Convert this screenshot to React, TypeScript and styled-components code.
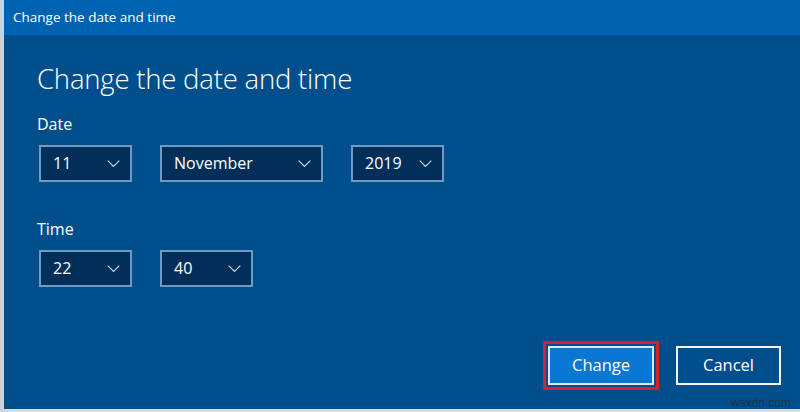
import styled, { createGlobalStyle } from 'styled-components'

const GlobalStyle = createGlobalStyle`
    html, body {
        margin: 0;
        padding: 0;
        background: #d6dce2;
    }
    * {
        box-sizing: border-box;
    }
`

interface ComboProps {
    value: string
    width: number
}

const Chevron = () => (
    <svg width="13" height="8" viewBox="0 0 13 8">
        <path d="M0.7 0.7 L6.5 6.5 L12.3 0.7" fill="none" stroke="#c9d9ea" strokeWidth="1.2" />
    </svg>
)

const Combo = ({ value, width }: ComboProps) => (
    <ComboBox $width={width}>
        <ComboValue>{ value }</ComboValue>
        <Chevron />
    </ComboBox>
)

const App = () => {
    return (
        <>
            <GlobalStyle />
            <Window>
                <TitleBar>Change the date and time</TitleBar>
                <Body>
                    <Heading>Change the date and time</Heading>
                    <Label>Date</Label>
                    <Row>
                        <Combo value="11" width={93} />
                        <Combo value="November" width={163} />
                        <Combo value="2019" width={93} />
                    </Row>
                    <Label $top={36}>Time</Label>
                    <Row>
                        <Combo value="22" width={93} />
                        <Combo value="40" width={93} />
                    </Row>
                    <Footer>
                        <Highlight>
                            <Button $primary>Change</Button>
                        </Highlight>
                        <Button>Cancel</Button>
                    </Footer>
                </Body>
                <BottomStrip />
                <Watermark>wsxdn.com</Watermark>
            </Window>
        </>
    )
}

export default App

// 样式组件
const Window = styled.div`
    position: relative;
    width: 800px;
    height: 412px;
    display: flex;
    flex-direction: column;
    border-left: 4px solid #c9d3dc;
    font-family: 'Open Sans', 'Noto Sans', sans-serif;
    overflow: hidden;
`
const TitleBar = styled.div`
    height: 35px;
    flex-shrink: 0;
    display: flex;
    align-items: center;
    padding-left: 9px;
    padding-bottom: 2px;
    background-color: #0063b1;
    color: #ffffff;
    font-size: 13.5px;
    user-select: none;
`
const Body = styled.div`
    flex: 1;
    display: flex;
    flex-direction: column;
    align-items: flex-start;
    padding: 24px 19px 0 33px;
    background-color: #004f8c;
    color: #ffffff;
`
const Heading = styled.h1`
    margin: 0;
    font-size: 27.5px;
    font-weight: 300;
    line-height: 40px;
    letter-spacing: -0.2px;
`
const Label = styled.div<{ $top?: number }>`
    margin-top: ${props => props.$top ?? 14}px;
    font-size: 16px;
    line-height: 22px;
`
const Row = styled.div`
    display: flex;
    gap: 28px;
    margin-top: 10px;
    padding-left: 2px;
`
const ComboBox = styled.div<{ $width: number }>`
    width: ${props => props.$width}px;
    height: 37px;
    display: flex;
    align-items: center;
    justify-content: space-between;
    padding: 0 10px 0 12px;
    border: 2px solid #6f9ac4;
    background-color: #022f59;
    color: #ffffff;
    font-size: 16px;
`
const ComboValue = styled.span`
    line-height: 1;
    padding-bottom: 1px;
`
const Footer = styled.div`
    align-self: stretch;
    margin-top: auto;
    margin-bottom: 19px;
    display: flex;
    justify-content: flex-end;
    align-items: center;
    gap: 17px;
`
const Highlight = styled.div`
    padding: 2px;
    border: 3px solid #d8202f;
`
const Button = styled.div<{ $primary?: boolean }>`
    width: ${props => props.$primary ? 106 : 105}px;
    height: 39px;
    display: flex;
    align-items: center;
    justify-content: center;
    padding-bottom: 2px;
    border: 2px solid ${props => props.$primary ? '#dce8f4' : '#f2f6fa'};
    background-color: ${props => props.$primary ? '#0a78d2' : 'transparent'};
    color: #ffffff;
    font-size: 16.5px;
    cursor: pointer;
    user-select: none;
`
const BottomStrip = styled.div`
    height: 3px;
    flex-shrink: 0;
    background-color: #d6dce2;
`
const Watermark = styled.div`
    position: absolute;
    right: 9px;
    bottom: 2px;
    color: #1d2f45;
    font-family: 'Liberation Sans', Arial, sans-serif;
    font-size: 12px;
    opacity: 0.8;
`
